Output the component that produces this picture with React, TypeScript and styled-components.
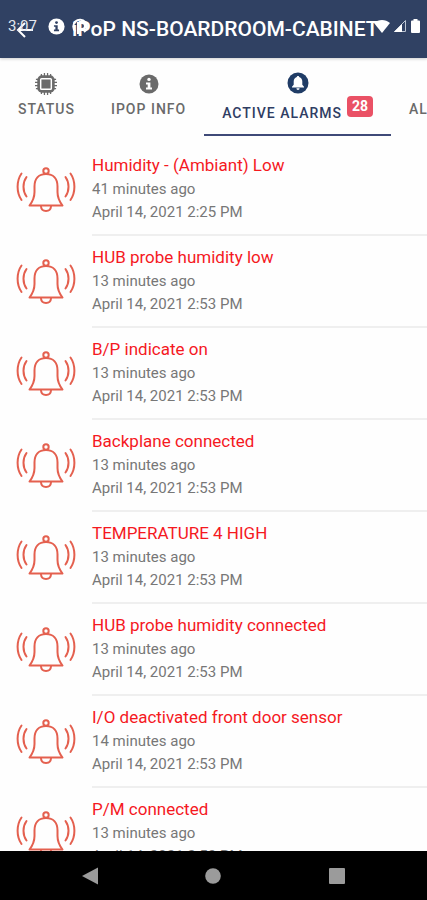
import React from "react";
import styled, { createGlobalStyle } from "styled-components";

const GlobalStyle = createGlobalStyle`
  *, *::before, *::after { box-sizing: border-box; }
  html, body, #root { height: 100%; }
  body {
    margin: 0;
    background: #fff;
    font-family: Roboto, "Liberation Sans", sans-serif;
  }
`;

const Screen = styled.div`
  display: flex;
  flex-direction: column;
  height: 100vh;
  overflow: hidden;
  background: #fefefe;
`;

const Header = styled.header`
  position: relative;
  flex: none;
  display: flex;
  align-items: center;
  height: 58px;
  background: #304163;
  color: #fff;
  box-shadow: 0 1px 3px rgba(0, 0, 0, 0.2);
`;

const BackButton = styled.button`
  flex: none;
  display: flex;
  justify-content: center;
  width: 48px;
  margin-right: 24px;
  padding: 0;
  border: 0;
  background: none;
  color: inherit;
`;

const Title = styled.h1`
  margin: 0;
  font-size: 21px;
  line-height: 28px;
  font-weight: 500;
  white-space: nowrap;
`;

const StatusBar = styled.div`
  position: absolute;
  inset: 0 0 auto;
  display: flex;
  align-items: center;
  height: 52px;
  padding: 0 6px 0 8px;
  pointer-events: none;
`;

const Clock = styled.span`
  width: 40px;
  font-size: 15px;
  color: #e3e7ee;
`;

const StatusIcons = styled.div<{ $end?: boolean }>`
  display: flex;
  align-items: center;
  gap: ${(p) => (p.$end ? "3px" : "7px")};
  margin-left: ${(p) => (p.$end ? "auto" : "0")};
`;

const TabBar = styled.div`
  flex: none;
  display: flex;
  height: 78px;
  overflow: hidden;
`;

const Tab = styled.button<{ $active?: boolean }>`
  flex: none;
  display: flex;
  flex-direction: column;
  align-items: center;
  gap: ${(p) => (p.$active ? "2px" : "3px")};
  padding: 14px 18px 0;
  border: 0;
  border-bottom: 2px solid ${(p) => (p.$active ? "#3f4a78" : "transparent")};
  background: none;
  color: ${(p) => (p.$active ? "#2f3d63" : "#6a6a6a")};
  font: 500 14px/20px Roboto, "Liberation Sans", sans-serif;
  letter-spacing: 1px;
  white-space: nowrap;
`;

const TabIcon = styled.span`
  display: flex;
  align-items: center;
  justify-content: center;
  height: 24px;
`;

const TabLabel = styled.span`
  display: flex;
  align-items: flex-end;
  gap: 5px;
`;

const Badge = styled.span`
  width: 26px;
  height: 21px;
  margin-bottom: 6px;
  border-radius: 4px;
  background: #ea5165;
  color: #fff;
  font-size: 14px;
  font-weight: 700;
  line-height: 20px;
  letter-spacing: 0;
  text-align: center;
`;

const AlarmList = styled.ul`
  flex: 1;
  min-height: 0;
  margin: 0;
  padding: 8px 0 0;
  overflow: hidden;
  list-style: none;
`;

const AlarmRow = styled.li`
  display: flex;
  height: 92px;
  padding-left: 16px;
`;

const BellBox = styled.div`
  flex: none;
  width: 76px;
  padding-top: 23px;
`;

const AlarmText = styled.div`
  flex: 1;
  padding-top: 9px;
  border-bottom: 2px solid #efefef;
`;

const AlarmName = styled.h2`
  margin: 0 0 1px;
  color: #f5191f;
  font-size: 17px;
  line-height: 24px;
  font-weight: 400;
`;

const AlarmMeta = styled.p`
  margin: 0;
  color: #777;
  font-size: 15px;
  line-height: 23px;
`;

const NavBar = styled.nav`
  flex: none;
  display: flex;
  align-items: center;
  justify-content: space-around;
  height: 49px;
  padding: 0 28px;
  background: #000;
`;

const NavButton = styled.button`
  display: flex;
  padding: 0;
  border: 0;
  background: none;
  color: #9b9b9b;
`;

const BackArrow = () => (
  <svg width="20" height="20" viewBox="0 0 20 20" fill="none" stroke="currentColor" strokeWidth="2">
    <path d="M19 11H4M11 4l-7 7 7 7" />
  </svg>
);

const InfoIcon = ({ size, cutout }: { size: number; cutout: string }) => (
  <svg width={size} height={size} viewBox="0 0 20 20">
    <circle cx="10" cy="10" r="9.5" fill="currentColor" />
    <g fill={cutout}>
      <circle cx="10" cy="5.4" r="1.7" />
      <path d="M7 8.4h4.4v5.2H13v2H7v-2h1.7v-3.2H7z" />
    </g>
  </svg>
);

const AppIcon = () => (
  <svg width="17" height="17" viewBox="0 0 17 17" fill="none" stroke="#fff" strokeWidth="2">
    <path d="M3.500 13.500A6.800 6.800 0 1 1 12 14" />
    <path d="M6 16V5h4a3 3 0 0 1 0 6H6" />
    <path d="M12 3.500 16 8l-4 4z" fill="#fff" stroke="none" />
  </svg>
);

const WifiIcon = () => (
  <svg width="16" height="14" viewBox="0 0 16 14">
    <path d="M0 4C4.700 0 11.300 0 16 4L8 14z" fill="#fff" />
  </svg>
);

const SignalIcon = () => (
  <svg width="14" height="14" viewBox="0 0 14 14">
    <path d="M12.500 1.500v11H1.500z" fill="none" stroke="#bcc5d3" strokeWidth="1" />
    <path d="M9 5V13H1z" fill="#fff" />
  </svg>
);

const BatteryIcon = () => (
  <svg width="11" height="14" viewBox="0 0 11 14">
    <path d="M3.500 0h4v1.500H9a1 1 0 0 1 1 1V13a1 1 0 0 1-1 1H2a1 1 0 0 1-1-1V2.500a1 1 0 0 1 1-1h1.500z" fill="#fff" />
  </svg>
);

const ChipIcon = () => (
  <svg width="22" height="22" viewBox="0 0 24 24">
    <path d="M7 1v22M10.300 0v24M13.700 0v24M17 1v22M1 7h22M0 10.300h24M0 13.700h24M1 17h22" stroke="currentColor" strokeWidth="1.400" />
    <rect x="2.500" y="2.500" width="19" height="19" rx="5" fill="currentColor" />
    <rect x="6.200" y="6.200" width="11.600" height="11.600" rx="1" fill="currentColor" stroke="#fefefe" strokeWidth="1.600" />
  </svg>
);

const ActiveBellIcon = () => (
  <svg width="22" height="22" viewBox="0 0 22 22">
    <circle cx="11" cy="11" r="10.500" fill="#203c66" />
    <path d="M11 4c-.8 0-1.200.5-1.200 1.100C7.700 5.700 6.700 7.400 6.700 9.500v3.300L5 14.700v.8h12v-.8l-1.700-1.900V9.500c0-2.100-1-3.800-3.100-4.400C12.200 4.500 11.800 4 11 4zM9.400 16.300a1.600 1.600 0 0 0 3.200 0z" fill="#fff" />
  </svg>
);

const AlarmBell = () => (
  <svg width="60" height="46" viewBox="0 0 60 46" fill="none" stroke="#e4604f" strokeWidth="2" strokeLinecap="round" strokeLinejoin="round">
    <circle cx="30" cy="4" r="2.700" />
    <path d="M18.500 25V19.500C18.500 11.500 23 7 30 7s11.500 4.500 11.500 12.500V25c0 5 1.500 9 5 13.500h-33c3.500-4.500 5-8.500 5-13.500z" />
    <path d="M25 39.500c.5 6 9.500 6 10 0" />
    <path d="M10.500 10c-4 5.500-4 14 0 19.500M5.500 6.500c-5.200 7.500-5.200 19 0 26.500M49.500 10c4 5.500 4 14 0 19.500M54.500 6.500c5.200 7.500 5.200 19 0 26.500" />
  </svg>
);

const alarms = [
  { name: "Humidity - (Ambiant) Low", age: "41 minutes ago", date: "April 14, 2021 2:25 PM" },
  { name: "HUB probe humidity low", age: "13 minutes ago", date: "April 14, 2021 2:53 PM" },
  { name: "B/P indicate on", age: "13 minutes ago", date: "April 14, 2021 2:53 PM" },
  { name: "Backplane connected", age: "13 minutes ago", date: "April 14, 2021 2:53 PM" },
  { name: "TEMPERATURE 4 HIGH", age: "13 minutes ago", date: "April 14, 2021 2:53 PM" },
  { name: "HUB probe humidity connected", age: "13 minutes ago", date: "April 14, 2021 2:53 PM" },
  { name: "I/O deactivated front door sensor", age: "14 minutes ago", date: "April 14, 2021 2:53 PM" },
  { name: "P/M connected", age: "13 minutes ago", date: "April 14, 2021 2:53 PM" },
];

export default function App() {
  return (
    <Screen>
      <GlobalStyle />
      <Header>
        <BackButton aria-label="Back"><BackArrow /></BackButton>
        <Title>iPoP NS-BOARDROOM-CABINET</Title>
        <StatusBar>
          <Clock>3:07</Clock>
          <StatusIcons>
            <InfoIcon size={17} cutout="#304163" />
            <AppIcon />
          </StatusIcons>
          <StatusIcons $end>
            <WifiIcon />
            <SignalIcon />
            <BatteryIcon />
          </StatusIcons>
        </StatusBar>
      </Header>
      <TabBar role="tablist">
        <Tab role="tab" aria-selected={false}>
          <TabIcon><ChipIcon /></TabIcon>
          <TabLabel>STATUS</TabLabel>
        </Tab>
        <Tab role="tab" aria-selected={false}>
          <TabIcon><InfoIcon size={20} cutout="#fefefe" /></TabIcon>
          <TabLabel>IPOP INFO</TabLabel>
        </Tab>
        <Tab role="tab" aria-selected $active>
          <ActiveBellIcon />
          <TabLabel>ACTIVE ALARMS<Badge>28</Badge></TabLabel>
        </Tab>
        <Tab role="tab" aria-selected={false}>
          <TabIcon />
          <TabLabel>ALARMS</TabLabel>
        </Tab>
      </TabBar>
      <AlarmList>
        {alarms.map((alarm) => (
          <AlarmRow key={alarm.name}>
            <BellBox><AlarmBell /></BellBox>
            <AlarmText>
              <AlarmName>{alarm.name}</AlarmName>
              <AlarmMeta>{alarm.age}</AlarmMeta>
              <AlarmMeta>{alarm.date}</AlarmMeta>
            </AlarmText>
          </AlarmRow>
        ))}
      </AlarmList>
      <NavBar aria-label="System">
        <NavButton aria-label="Back">
          <svg width="16" height="18" viewBox="0 0 16 18"><path d="M0 9 16 .5v17z" fill="currentColor" /></svg>
        </NavButton>
        <NavButton aria-label="Home">
          <svg width="16" height="16" viewBox="0 0 16 16"><circle cx="8" cy="8" r="7.800" fill="currentColor" /></svg>
        </NavButton>
        <NavButton aria-label="Overview">
          <svg width="16" height="16" viewBox="0 0 16 16"><rect width="16" height="16" rx="1" fill="currentColor" /></svg>
        </NavButton>
      </NavBar>
    </Screen>
  );
}
